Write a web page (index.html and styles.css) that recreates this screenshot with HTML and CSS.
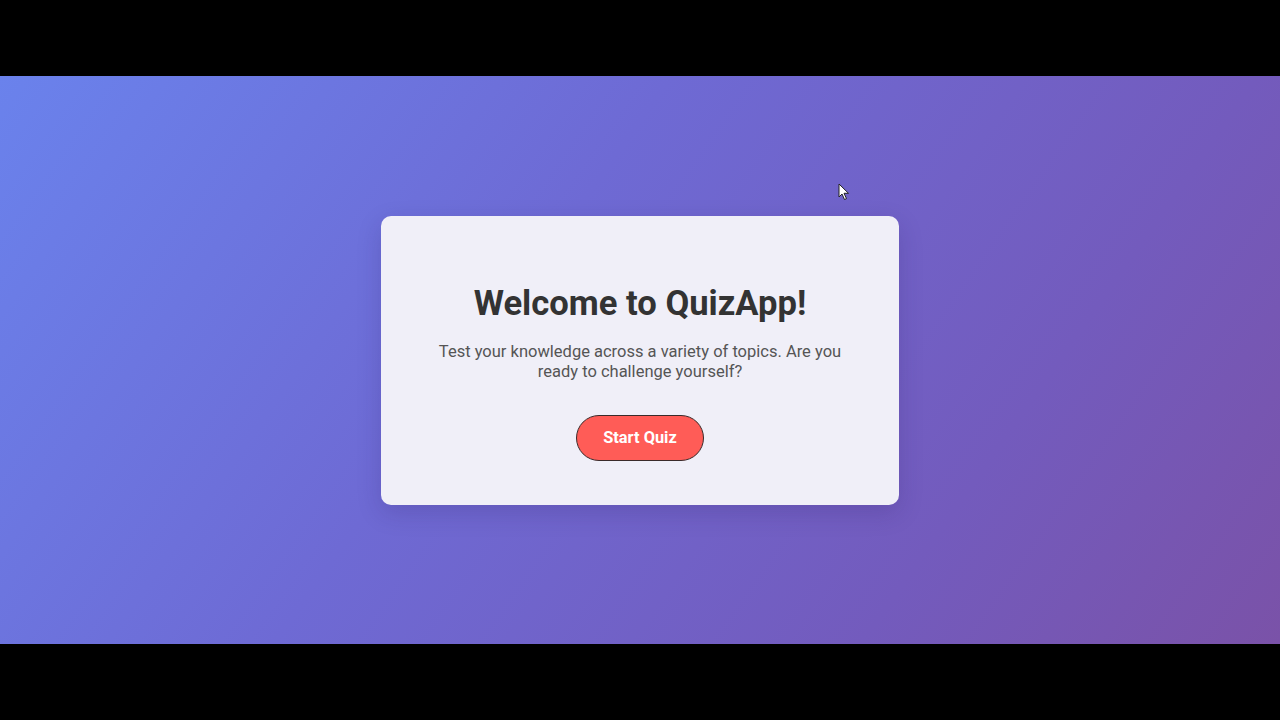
FILE: index.html
```html
<!DOCTYPE html>
<html lang="en">
<head>
<meta charset="utf-8">
<title>QuizApp</title>
<link rel="stylesheet" href="styles.css">
</head>
<body>
<main class="stage">
  <section class="card">
    <h1 class="title">Welcome to QuizApp!</h1>
    <p class="lead">Test your knowledge across a variety of topics. Are you ready to challenge yourself?</p>
    <button class="start-btn" type="button">Start Quiz</button>
  </section>
  <svg class="cursor" width="12" height="18" viewBox="0 0 12 18" aria-hidden="true">
    <path d="M1 1 L1 14 L4 11 L6.5 16.5 L8.5 15.6 L6 10.3 L10.5 10.3 Z" fill="#fff" stroke="#222" stroke-width="1" stroke-linejoin="round"/>
  </svg>
</main>
</body>
</html>
```
FILE: styles.css
```css
* { box-sizing: border-box; }
html, body { margin: 0; padding: 0; }
body {
  width: 1280px;
  height: 720px;
  background: #000;
  font-family: Roboto, "Liberation Sans", Arial, sans-serif;
  display: flex;
  flex-direction: column;
  justify-content: center;
  overflow: hidden;
}
.stage {
  position: relative;
  height: 568px;
  background: linear-gradient(125deg, #6a82ec 0%, #6e6ad4 40%, #735bbd 75%, #7a52a8 100%);
  display: flex;
  align-items: center;
  justify-content: center;
}
.card {
  width: 518px;
  padding: 40px 48px 44px;
  background: #f0eff8;
  border-radius: 10px;
  box-shadow: 0 8px 24px rgba(40, 20, 90, 0.18);
  display: flex;
  flex-direction: column;
  align-items: center;
  text-align: center;
}
.title {
  margin: 27px 0 0;
  font-size: 34.6px;
  line-height: 40px;
  font-weight: 700;
  color: #333;
}
.lead {
  margin: 19px 0 0;
  font-size: 16.5px;
  line-height: 20px;
  color: #555;
}
.start-btn {
  margin-top: 33px;
  width: 128px;
  height: 46px;
  border-radius: 23px;
  border: 1px solid #3a2a2a;
  background: #ff5c57;
  color: #fff;
  font-family: inherit;
  font-size: 16.4px;
  font-weight: 700;
  cursor: pointer;
}
.cursor {
  position: absolute;
  left: 838px;
  top: 107px;
}
```
